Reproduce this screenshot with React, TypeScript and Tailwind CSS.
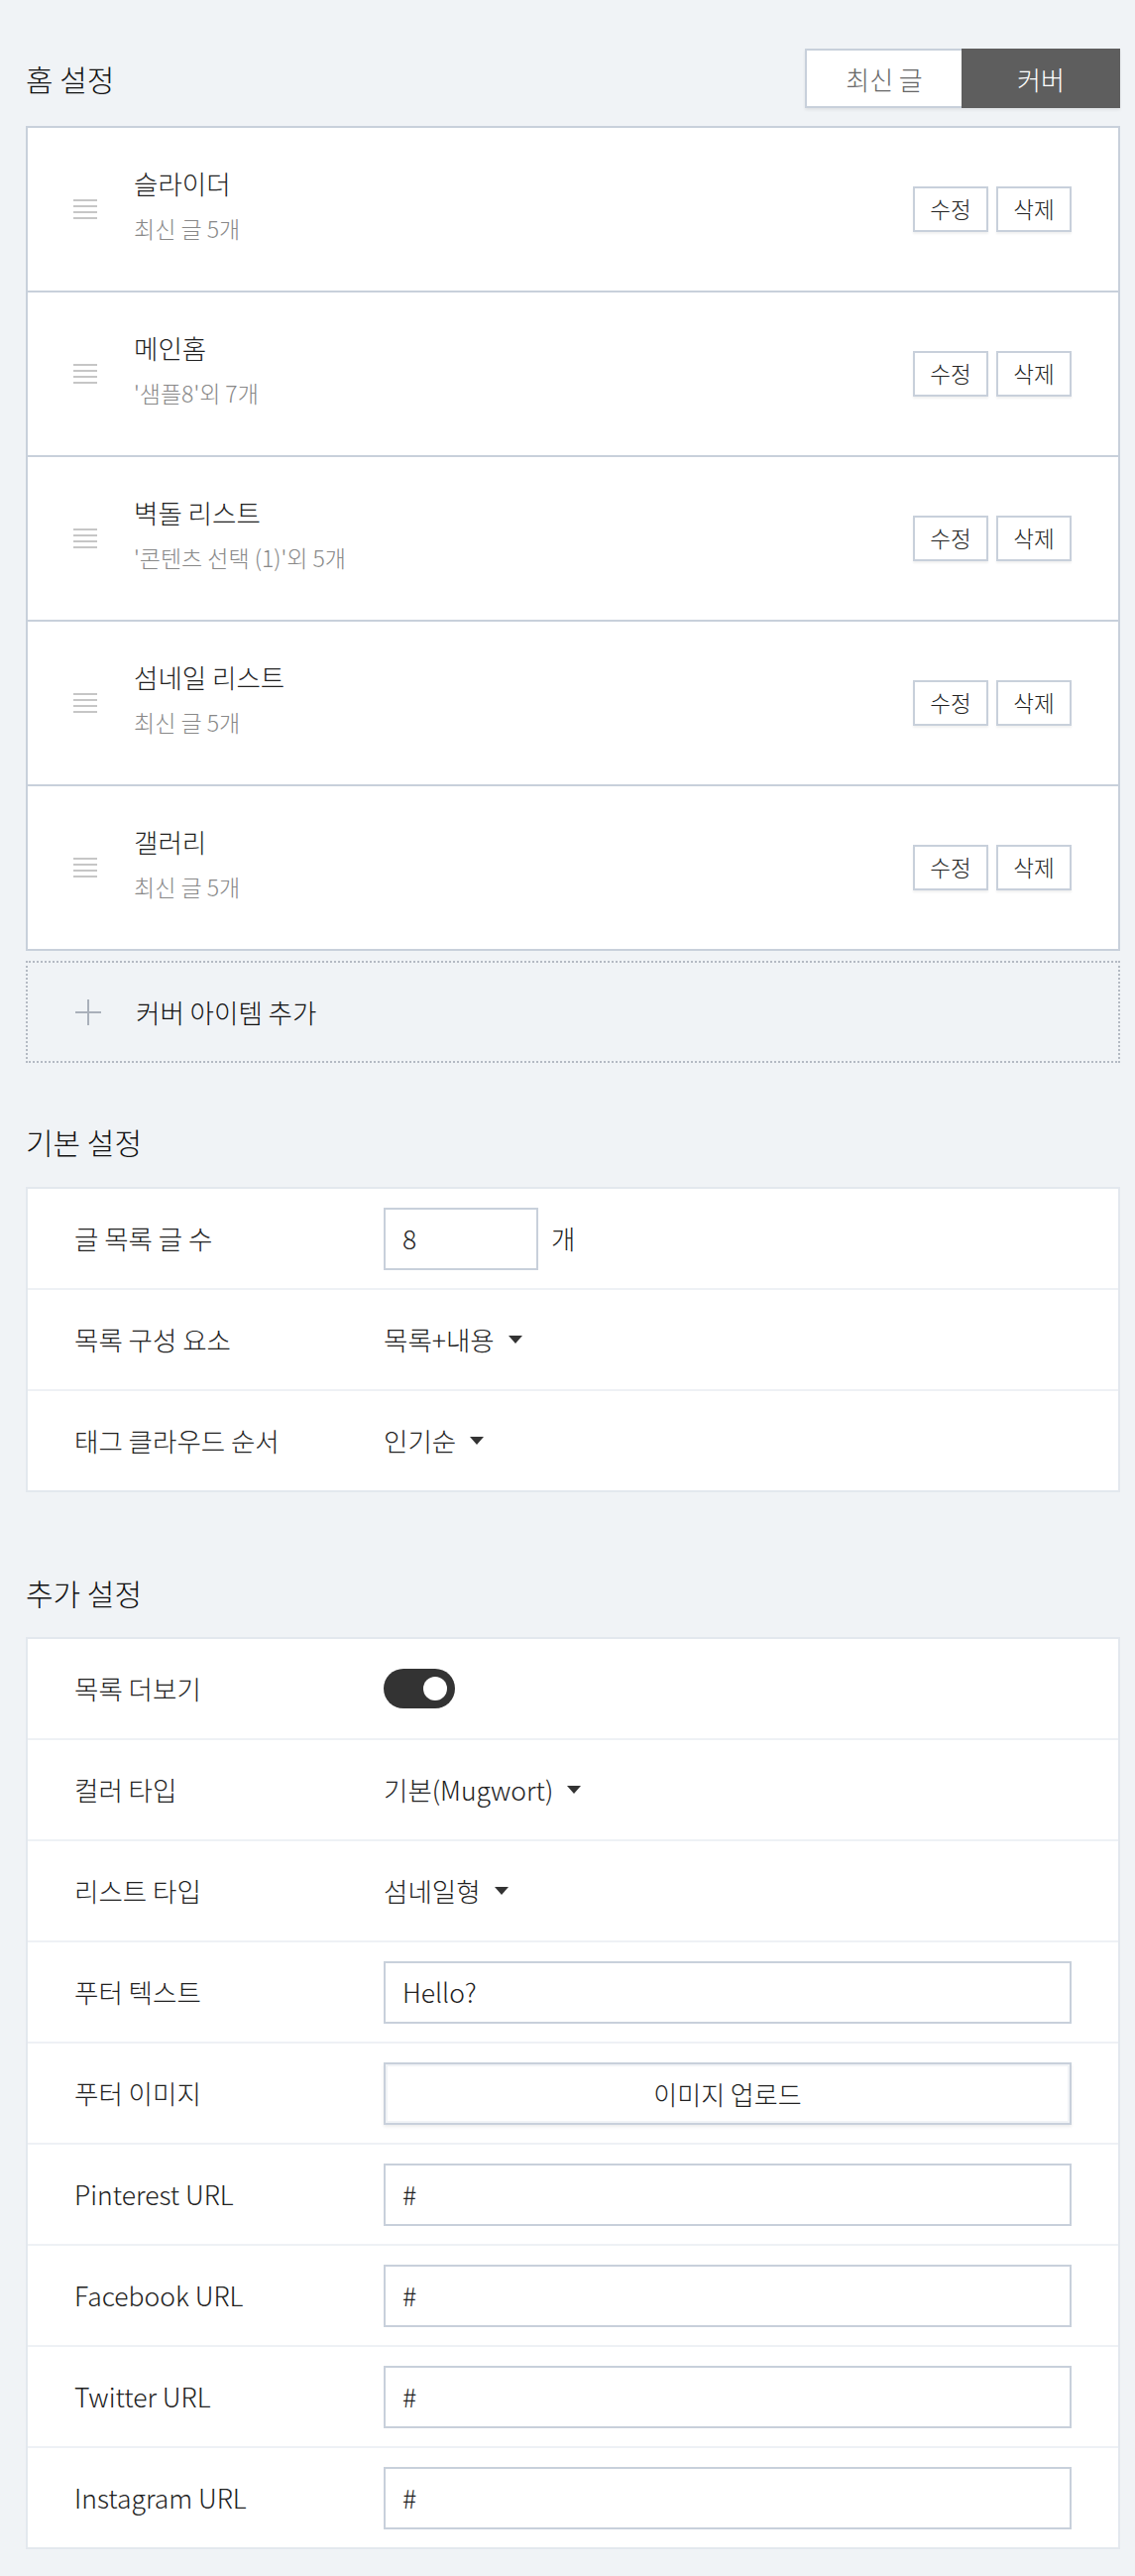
import React from 'react';

const coverItems = [
  { title: '슬라이더', desc: '최신 글 5개' },
  { title: '메인홈', desc: "'샘플8'외 7개" },
  { title: '벽돌 리스트', desc: "'콘텐츠 선택 (1)'외 5개" },
  { title: '섬네일 리스트', desc: '최신 글 5개' },
  { title: '갤러리', desc: '최신 글 5개' },
];

const Caret = () => (
  <svg width="14" height="8" viewBox="0 0 14 8" className="ml-[14px]">
    <path d="M0 0h14L7 8z" fill="#333" />
  </svg>
);

const Row = ({ label, children }: { label: string; children: React.ReactNode }) => (
  <div className="h-[102px] flex items-center border-b-2 border-[#eef1f5] last:border-[#e3e8ee] pl-[47px] pr-[47px]">
    <div className="w-[312px] shrink-0 text-[26.5px] text-[#222]">{label}</div>
    <div className="flex-1 flex items-center text-[26.5px] text-[#222]">{children}</div>
  </div>
);

const TextInput = ({ value, className }: { value: string; className?: string }) => (
  <div
    className={
      'h-[63px] border-2 border-[#c8d0db] bg-white flex items-center pl-[17px] text-[26.5px] text-[#222] ' +
      (className ?? 'w-full')
    }
  >
    {value}
  </div>
);

const SectionTitle = ({ children }: { children: React.ReactNode }) => (
  <h2 className="h-[60px] flex items-center text-[30px] text-[#111] font-light">{children}</h2>
);

export default function App() {
  return (
    <div className="min-h-[2598px] bg-[#f0f3f6] pl-[26px] pr-[15px] pt-[49px] pb-[27px] font-light font-['Noto_Sans_CJK_KR','Noto_Sans',sans-serif]">
      {/* 홈 설정 */}
      <div className="flex items-center justify-between h-[60px]">
        <SectionTitle>홈 설정</SectionTitle>
        <div className="flex h-[60px] border-2 border-[#c8d0db] shadow-[0_2px_3px_rgba(0,0,0,0.07)]">
          <button className="w-[156px] bg-white text-[26px] text-[#666]">최신 글</button>
          <button className="w-[160px] -my-[2px] -mr-[2px] bg-[#5e5e5e] text-[26px] text-white">커버</button>
        </div>
      </div>

      <div className="mt-[18px] bg-white border-x-2 border-t-2 border-[#c8d0db]">
        {coverItems.map((item) => (
          <div key={item.title} className="h-[166px] border-b-2 border-[#c8d0db] flex items-center pl-[46px] pr-[47px]">
            <div className="w-[24px] flex flex-col gap-[4px]">
              <div className="h-[2px] bg-[#c6c6c6]" />
              <div className="h-[2px] bg-[#c6c6c6]" />
              <div className="h-[2px] bg-[#c6c6c6]" />
              <div className="h-[2px] bg-[#c6c6c6]" />
            </div>
            <div className="ml-[37px] flex-1 -mt-[10px]">
              <div className="text-[26.5px] leading-[40px] text-[#222]">{item.title}</div>
              <div className="mt-[7px] text-[23px] leading-[36px] text-[#888]">{item.desc}</div>
            </div>
            <div className="flex gap-[8px]">
              <button className="w-[76px] h-[46px] border-2 border-[#c8d0db] bg-white text-[22.5px] text-[#222] shadow-[0_2px_2px_rgba(0,0,0,0.06)]">
                수정
              </button>
              <button className="w-[76px] h-[46px] border-2 border-[#c8d0db] bg-white text-[22.5px] text-[#222] shadow-[0_2px_2px_rgba(0,0,0,0.06)]">
                삭제
              </button>
            </div>
          </div>
        ))}
      </div>

      <div className="mt-[10px] h-[103px] border-2 border-dotted border-[#b4bac3] flex items-center pl-[48px]">
        <svg width="26" height="26" viewBox="0 0 26 26">
          <path d="M13 0v26M0 13h26" stroke="#a9b0ba" strokeWidth="2" />
        </svg>
        <span className="ml-[35px] text-[26.5px] text-[#111]">커버 아이템 추가</span>
      </div>

      {/* 기본 설정 */}
      <div className="mt-[49px]">
        <SectionTitle>기본 설정</SectionTitle>
      </div>
      <div className="mt-[16px] bg-white border-x-2 border-t-2 border-[#e3e8ee]">
        <Row label="글 목록 글 수">
          <TextInput value="8" className="w-[156px]" />
          <span className="ml-[13px]">개</span>
        </Row>
        <Row label="목록 구성 요소">
          <span>목록+내용</span>
          <Caret />
        </Row>
        <Row label="태그 클라우드 순서">
          <span>인기순</span>
          <Caret />
        </Row>
      </div>

      {/* 추가 설정 */}
      <div className="mt-[71px]">
        <SectionTitle>추가 설정</SectionTitle>
      </div>
      <div className="mt-[15px] bg-white border-x-2 border-t-2 border-[#e3e8ee]">
        <Row label="목록 더보기">
          <div className="w-[72px] h-[40px] rounded-full bg-[#333] flex items-center justify-end pr-[8px]">
            <div className="w-[24px] h-[24px] rounded-full bg-white" />
          </div>
        </Row>
        <Row label="컬러 타입">
          <span>기본(Mugwort)</span>
          <Caret />
        </Row>
        <Row label="리스트 타입">
          <span>섬네일형</span>
          <Caret />
        </Row>
        <Row label="푸터 텍스트">
          <TextInput value="Hello?" />
        </Row>
        <Row label="푸터 이미지">
          <button className="w-full h-[63px] border-2 border-[#c8d0db] bg-white text-[26px] text-[#222] shadow-[inset_0_0_0_2px_#f1f3f6,0_2px_3px_rgba(0,0,0,0.08)]">
            이미지 업로드
          </button>
        </Row>
        <Row label="Pinterest URL">
          <TextInput value="#" />
        </Row>
        <Row label="Facebook URL">
          <TextInput value="#" />
        </Row>
        <Row label="Twitter URL">
          <TextInput value="#" />
        </Row>
        <Row label="Instagram URL">
          <TextInput value="#" />
        </Row>
      </div>
    </div>
  );
}
